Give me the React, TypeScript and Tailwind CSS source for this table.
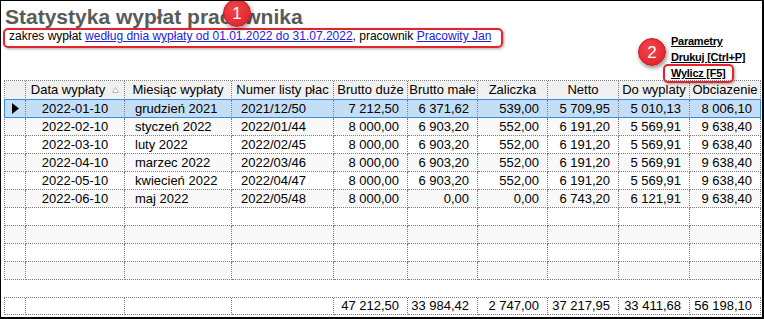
import React from "react";

const GRID =
  "grid grid-cols-[21px_99px_107px_102px_74px_70px_70px_71px_71px_71px]";
const CELL =
  "border-r border-b border-dotted border-[#7f7f7f] flex items-center overflow-hidden whitespace-nowrap";

type Row = [string, string, string, string, string, string, string, string, string];

const rows: Row[] = [
  ["2022-01-10", "grudzień 2021", "2021/12/50", "7 212,50", "6 371,62", "539,00", "5 709,95", "5 010,13", "8 006,10"],
  ["2022-02-10", "styczeń 2022", "2022/01/44", "8 000,00", "6 903,20", "552,00", "6 191,20", "5 569,91", "9 638,40"],
  ["2022-03-10", "luty 2022", "2022/02/45", "8 000,00", "6 903,20", "552,00", "6 191,20", "5 569,91", "9 638,40"],
  ["2022-04-10", "marzec 2022", "2022/03/46", "8 000,00", "6 903,20", "552,00", "6 191,20", "5 569,91", "9 638,40"],
  ["2022-05-10", "kwiecień 2022", "2022/04/47", "8 000,00", "6 903,20", "552,00", "6 191,20", "5 569,91", "9 638,40"],
  ["2022-06-10", "maj 2022", "2022/05/48", "8 000,00", "0,00", "0,00", "6 743,20", "6 121,91", "9 638,40"],
];

const totals = ["47 212,50", "33 984,42", "2 747,00", "37 217,95", "33 411,68", "56 198,10"];

function Badge({ n, className }: { n: string; className: string }) {
  return (
    <div
      className={
        "absolute w-[28px] h-[28px] rounded-full border border-[#c8161c] bg-[radial-gradient(circle_at_40%_35%,#f2454a,#da1f26)] shadow-[1px_2px_4px_rgba(0,0,0,0.45)] flex items-center justify-center text-white text-[17px] leading-none font-['Liberation_Sans',Arial,sans-serif] " +
        className
      }
    >
      {n}
    </div>
  );
}

function DataRow({ r, idx }: { r?: Row; idx: number }) {
  const selected = idx === 0;
  const bg = selected ? "bg-[#c4def5]" : idx % 2 === 1 ? "bg-[#f8f8f8]" : "bg-white";
  const c = r ?? (["", "", "", "", "", "", "", "", ""] as Row);
  return (
    <div className={GRID + " h-[18px] relative " + bg}>
      <div className={CELL + " justify-center"}>
        {selected && (
          <svg width="7" height="11" viewBox="0 0 7 11">
            <path d="M0 0 L7 5.5 L0 11 Z" fill="#000" />
          </svg>
        )}
      </div>
      <div className={CELL + " justify-center"}>{c[0]}</div>
      <div className={CELL + " pl-[10px]"}>{c[1]}</div>
      <div className={CELL + " pl-[9px]"}>{c[2]}</div>
      {c.slice(3).map((v, i) => (
        <div key={i} className={CELL + " justify-end pr-[8px]"}>
          {v}
        </div>
      ))}
      {selected && (
        <div className="absolute -top-px -left-px right-0 bottom-0 border border-[#3a8ae4] pointer-events-none" />
      )}
    </div>
  );
}

export default function App() {
  const headers = [
    "Miesiąc wypłaty",
    "Numer listy płac",
    "Brutto duże",
    "Brutto małe",
    "Zaliczka",
    "Netto",
    "Do wyplaty",
    "Obciazenie",
  ];
  return (
    <div className="w-[764px] h-[319px] bg-white border-l border-t border-r-2 border-b-2 border-black relative overflow-hidden font-['Liberation_Sans',Arial,sans-serif] text-black">
      {/* header area */}
      <div className="h-[79px] flex">
        <div className="flex-1 flex flex-col">
          <div className="mt-[5px] pl-[4px] text-[21px] leading-[22px] font-bold text-[#5a5a5a]">
            Statystyka wypłat pracownika
          </div>
          <div className="pl-[8px] text-[12px] leading-[16px] whitespace-nowrap">
            zakres wypłat{" "}
            <span className="text-[#2222dd] underline">
              według dnia wypłaty od 01.01.2022 do 31.07.2022
            </span>
            , pracownik <span className="text-[#2222dd] underline">Pracowity Jan</span>
          </div>
        </div>
        <div className="w-[91px] shrink-0 pt-[32px] flex flex-col text-[11px] leading-[16px] font-bold whitespace-nowrap tracking-[-0.25px]">
          <span className="underline">Parametry</span>
          <span className="underline">Drukuj [Ctrl+P]</span>
          <span className="underline">Wylicz [F5]</span>
        </div>
      </div>

      {/* table */}
      <div className="ml-[3px] w-[757px] border-l border-t border-dotted border-[#7f7f7f] text-[13px]">
        <div className={GRID + " h-[19px] bg-[#f0f0f0]"}>
          <div className={CELL}></div>
          <div className={CELL + " justify-center"}>
            <span>Data wypłaty</span>
            <svg width="7" height="6" viewBox="0 0 7 6" className="ml-[7px]">
              <path d="M3.5 0.5 L6.5 5.5 L0.5 5.5 Z" fill="#fff" stroke="#b8b8b8" strokeWidth="1" />
            </svg>
          </div>
          {headers.map((h) => (
            <div key={h} className={CELL + " justify-center"}>
              {h}
            </div>
          ))}
        </div>
        {Array.from({ length: 10 }).map((_, i) => (
          <DataRow key={i} r={rows[i]} idx={i} />
        ))}
      </div>

      {/* footer totals */}
      <div className="mt-[17px] ml-[3px] w-[757px] border-l border-t border-dotted border-[#7f7f7f] text-[13px]">
        <div className={GRID + " h-[17px] bg-white"}>
          <div className={CELL}></div>
          <div className={CELL}></div>
          <div className={CELL}></div>
          <div className={CELL}></div>
          {totals.map((t) => (
            <div key={t} className={CELL + " justify-end pr-[8px]"}>
              {t}
            </div>
          ))}
        </div>
      </div>

      {/* annotations */}
      <div className="absolute left-[2px] top-[27px] w-[500px] h-[20px] border-2 border-[#e4242a] rounded-[5px] shadow-[1px_1px_3px_rgba(0,0,0,0.35)]" />
      <div className="absolute left-[662px] top-[63px] w-[71px] h-[19px] border-2 border-[#e4242a] rounded-[5px] shadow-[1px_1px_3px_rgba(0,0,0,0.35)]" />
      <Badge n="1" className="left-[222px] top-[-2px]" />
      <Badge n="2" className="left-[637px] top-[37px]" />
    </div>
  );
}
